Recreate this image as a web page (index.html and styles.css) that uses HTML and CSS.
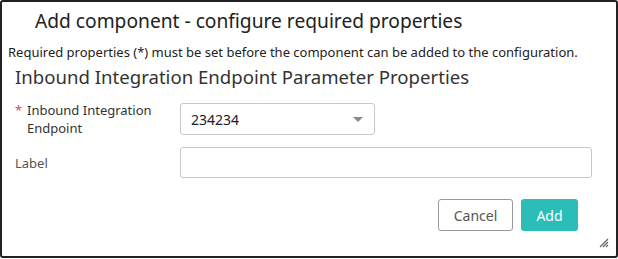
FILE: index.html
```html
<!DOCTYPE html>
<html lang="en">

<head>
    <meta charset="UTF-8">
    <title>Add component</title>
    <link rel="stylesheet" href="styles.css">
</head>

<body>
    <div class="dialog">
        <h1 class="title">Add component - configure required properties</h1>
        <p class="notice">Required properties (*) must be set before the component can be added to the configuration.</p>
        <h2 class="section">Inbound Integration Endpoint Parameter Properties</h2>

        <div class="row">
            <label class="label required"><span class="star">*</span><span>Inbound Integration Endpoint</span></label>
            <div class="select">
                <span>234234</span>
                <span class="caret"></span>
            </div>
        </div>

        <div class="row">
            <label class="label muted">Label</label>
            <div class="input"></div>
        </div>

        <div class="actions">
            <button class="btn cancel">Cancel</button>
            <button class="btn add">Add</button>
        </div>

        <svg class="grip" width="12" height="12" viewBox="0 0 12 12">
            <path d="M11 3 L3 11 M11 6 L6 11 M11 9 L9 11" stroke="#666" stroke-width="1.2" fill="none" />
        </svg>
    </div>
</body>

</html>
```

FILE: styles.css
```css
html, body {
    margin: 0;
    background: #fff;
}

body {
    font-family: "Noto Sans", "Open Sans", sans-serif;
    color: #222;
}

.dialog {
    position: relative;
    box-sizing: border-box;
    width: 618px;
    height: 258px;
    border: 2px solid #222;
    border-radius: 3px;
    padding: 0 0 0 6px;
}

.title {
    margin: 0;
    padding: 5px 0 0 27px;
    font-size: 19.2px;
    font-weight: normal;
    line-height: 28px;
    color: #222;
}

.notice {
    margin: 9px 0 0 0;
    font-size: 13px;
    line-height: 17px;
    color: #222;
}

.section {
    margin: 3px 0 0 7px;
    font-size: 18.6px;
    font-weight: normal;
    line-height: 26px;
    color: #333;
}

.row {
    display: flex;
    align-items: center;
    margin-top: 11px;
    padding-left: 7px;
}

.row + .row {
    margin-top: 10px;
}

.label {
    width: 165px;
    font-size: 13px;
    line-height: 18px;
    display: flex;
    color: #333;
}

.label.muted {
    color: #555;
}

.star {
    color: #d9534f;
    width: 12px;
    flex: none;
}

.required span:last-child {
    width: 130px;
}

.select {
    box-sizing: border-box;
    width: 195px;
    height: 32px;
    border: 1px solid #c8c8c8;
    border-radius: 3px;
    display: flex;
    align-items: center;
    justify-content: space-between;
    padding: 0 11px 0 10px;
    font-size: 14px;
}

.caret {
    width: 0;
    height: 0;
    border-left: 5px solid transparent;
    border-right: 5px solid transparent;
    border-top: 5px solid #888;
}

.input {
    box-sizing: border-box;
    width: 412px;
    height: 31px;
    border: 1px solid #c8c8c8;
    border-radius: 3px;
}

.actions {
    display: flex;
    justify-content: flex-end;
    gap: 8px;
    margin-top: 21px;
    padding-right: 38px;
}

.btn {
    font-family: inherit;
    font-size: 14px;
    height: 32px;
    border-radius: 3px;
    cursor: pointer;
}

.cancel {
    width: 75px;
    background: #fff;
    color: #555;
    border: 1px solid #999;
}

.add {
    width: 57px;
    background: #2bbdb8;
    color: #fff;
    border: none;
}

.grip {
    position: absolute;
    right: 7px;
    bottom: 8px;
}
```
